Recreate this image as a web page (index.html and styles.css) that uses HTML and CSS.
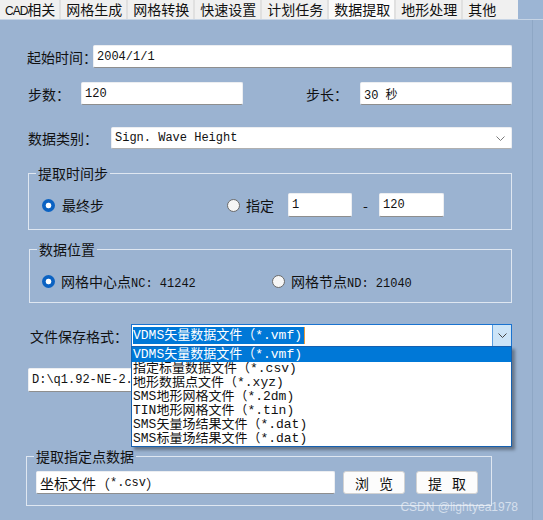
FILE: index.html
```html
<!DOCTYPE html>
<html lang="zh-CN">
<head>
  <meta charset="UTF-8">
  <meta name="viewport" content="width=device-width, initial-scale=1.0">
  <title>数据提取</title>
  <link rel="stylesheet" href="styles.css">
</head>
<body>
  <!-- Tab bar -->
  <div class="tabs">
    <div class="tab"><span class="tab-latin">CAD</span>相关</div>
    <div class="tab">网格生成</div>
    <div class="tab">网格转换</div>
    <div class="tab">快速设置</div>
    <div class="tab">计划任务</div>
    <div class="tab active">数据提取</div>
    <div class="tab">地形处理</div>
    <div class="tab last">其他</div>
  </div>

  <!-- Data extraction page -->
  <div class="panel">
    <div class="row row-first">
      <span class="label label-start">起始时间：</span>
      <div class="field">2004/1/1</div>
    </div>

    <div class="row row-steps">
      <span class="label label-steps">步数：</span>
      <div class="field field-steps">120</div>
      <span class="label label-len">步长：</span>
      <div class="field">30 秒</div>
    </div>

    <div class="row row-type">
      <span class="label label-type">数据类别：</span>
      <div class="field select">
        <span>Sign. Wave Height</span>
        <svg class="chevron" width="9" height="5" viewBox="0 0 9 5"><polyline points="0.5,0.5 4.5,4.5 8.5,0.5" fill="none" stroke="#7a7a7a" stroke-width="1"/></svg>
      </div>
    </div>

    <!-- Time step group -->
    <div class="group group-time">
      <span class="legend">提取时间步</span>
      <div class="opts opts-time">
        <div class="opt opt-time"><span class="radio on"></span><span>最终步</span></div>
        <div class="opt"><span class="radio"></span><span>指定</span></div>
        <div class="field field-num">1</div>
        <span class="dash">-</span>
        <div class="field field-num field-num2">120</div>
      </div>
    </div>

    <!-- Data location group -->
    <div class="group group-pos">
      <span class="legend">数据位置</span>
      <div class="opts">
        <div class="opt opt-pos"><span class="radio on"></span><span>网格中心点<span class="mono">NC: 41242</span></span></div>
        <div class="opt"><span class="radio"></span><span>网格节点<span class="mono">ND: 21040</span></span></div>
      </div>
    </div>

    <div class="row row-format">
      <span class="label label-format">文件保存格式：</span>
      <div class="combo">
        <div class="combo-value"><span class="hl">VDMS矢量数据文件（*.vmf)</span></div>
        <div class="combo-btn">
          <svg width="9" height="5" viewBox="0 0 9 5"><polyline points="0.5,0.5 4.5,4.5 8.5,0.5" fill="none" stroke="#444" stroke-width="1"/></svg>
        </div>
        <div class="combo-list">
          <div class="combo-item sel">VDMS矢量数据文件（*.vmf)</div>
          <div class="combo-item">指定标量数据文件（*.csv)</div>
          <div class="combo-item">地形数据点文件（*.xyz)</div>
          <div class="combo-item">SMS地形网格文件（*.2dm)</div>
          <div class="combo-item">TIN地形网格文件（*.tin)</div>
          <div class="combo-item">SMS矢量场结果文件（*.dat)</div>
          <div class="combo-item">SMS标量场结果文件（*.dat)</div>
        </div>
      </div>
    </div>

    <div class="row row-path">
      <div class="field field-path">D:\q1.92-NE-2.dat</div>
    </div>

    <!-- Point extraction group -->
    <div class="group group-point">
      <span class="legend">提取指定点数据</span>
      <div class="row">
        <div class="field field-file"><span class="cjk">坐标文件（</span>*.csv<span class="cjk">）</span></div>
        <button class="btn">浏览</button>
        <button class="btn btn-last">提取</button>
      </div>
    </div>
  </div>

  <div class="watermark">CSDN @lightyea1978</div>
</body>
</html>
```

FILE: styles.css
```css
/* General */
* {
  box-sizing: border-box;
}

body {
  margin: 0;
  width: 543px;
  height: 520px;
  overflow: hidden;
  position: relative;
  background: #9bb3d1;
  font-family: "Noto Sans CJK SC", sans-serif;
  font-size: 14px;
  color: #111;
}

/* Tabs */
.tabs {
  display: flex;
  height: 20px;
  background: #9cb5d4;
  border-bottom: 1px solid #c6d4e5;
}

.tab {
  padding: 0 4px 0 5px;
  background: #f0f0f0;
  border-right: 2px solid #e0e0e0;
  line-height: 19px;
  white-space: nowrap;
}

.tab.active {
  background: #fbfbfb;
}

.tab.last {
  padding-right: 22px;
  border-right: 0;
}

.tab-latin {
  font-family: "Liberation Sans", sans-serif;
  font-size: 12px;
  letter-spacing: -1px;
}

/* Panel */
.panel {
  width: 533px;
  height: 500px;
  border-right: 1px solid #8ea7c5;
  padding: 25px 20px 0 27px;
  display: flex;
  flex-direction: column;
}

.row {
  display: flex;
  align-items: center;
}

.label {
  flex-shrink: 0;
  white-space: nowrap;
}

.mono {
  font-family: "Liberation Mono", monospace;
  font-size: 12px;
}

.field {
  flex: 1;
  min-width: 0;
  height: 23px;
  display: flex;
  align-items: center;
  padding-left: 3px;
  background: #fff;
  border: 1px solid #eceef1;
  border-bottom-color: #8e8e8e;
  border-radius: 2px;
  font-family: "Liberation Mono", "Noto Sans CJK SC", monospace;
  font-size: 12px;
  white-space: nowrap;
  overflow: hidden;
}

.row-first { height: 23px; }
.label-start { width: 66px; }

.row-steps { margin-top: 14px; }
.label-steps { width: 53px; margin-left: 1px; }
.field-steps { flex: none; width: 162px; }
.label-len { width: 54px; margin-left: 63px; }

.row-type { margin-top: 22px; }
.label-type { width: 83px; margin-left: 1px; }

.select {
  height: 22px;
  justify-content: space-between;
  padding-right: 6px;
  border-bottom-color: #b0b0b0;
}

/* Group boxes */
.group {
  position: relative;
  border: 1px solid #dfe7f1;
}

.legend {
  position: absolute;
  top: -11px;
  left: 7px;
  padding: 0 2px;
  line-height: 20px;
  background: #9bb3d1;
}

.group-time {
  margin: 24px 0 0 1px;
  padding: 19px 0 12px 13px;
}

.group-pos {
  margin: 19px 0 0 2px;
  padding: 23px 0 13px 12px;
}

.opts {
  display: flex;
  align-items: center;
  height: 16px;
}

.opts-time { height: 24px; }

.opt {
  display: flex;
  align-items: center;
  gap: 6px;
  white-space: nowrap;
}

.opt-time { width: 185px; gap: 7px; }
.opt-pos { width: 230px; }

.radio {
  width: 13px;
  height: 13px;
  border-radius: 50%;
  background: #f6f6f6;
  border: 1px solid #6a6a6a;
}

.radio.on {
  border: 0;
  background: radial-gradient(circle, #fff 0 2.5px, #0b62c2 3.2px);
}

.field-num {
  flex: none;
  width: 64px;
  height: 24px;
  margin-left: 14px;
}

.field-num2 {
  width: 65px;
  margin-left: 0;
}

.dash {
  width: 27px;
  text-align: center;
}

/* Format combo */
.row-format { margin-top: 21px; }
.label-format { width: 101px; margin-left: 3px; }

.combo {
  position: relative;
  flex: 1;
  height: 23px;
  display: flex;
  background: #fff;
  border: 1px solid #1a73d0;
  font-family: "Liberation Mono", "Noto Sans CJK SC", monospace;
  font-size: 13px;
}

.combo-value {
  flex: 1;
  display: flex;
  align-items: center;
  padding-left: 1px;
}

.combo-value .hl {
  background: #0078d7;
  color: #fff;
  line-height: 17px;
  padding-right: 2px;
  border-right: 1px solid #e89a3c;
  white-space: nowrap;
}

.combo-btn {
  width: 19px;
  display: flex;
  align-items: center;
  justify-content: center;
  background: #cce4f7;
  border-left: 1px solid #5c9fe0;
}

.combo-list {
  position: absolute;
  top: 21px;
  left: -1px;
  right: -1px;
  z-index: 5;
  background: #fff;
  border: 1px solid #1560b0;
  box-shadow: 3px 3px 3px rgba(0, 0, 0, 0.35);
}

.combo-item {
  height: 14px;
  line-height: 14px;
  padding-left: 1px;
  white-space: nowrap;
  overflow: hidden;
}

.combo-item.sel {
  height: 15px;
  line-height: 15px;
  background: #0078d7;
  color: #fff;
}

/* Path and point group */
.row-path { margin-top: 21px; }

.field-path {
  flex: none;
  width: 460px;
  height: 24px;
  margin-left: 1px;
}

.group-point {
  margin: 64px 20px 0 -1px;
  padding: 14px 13px 11px 9px;
}

.field-file {
  flex: none;
  width: 299px;
}

.cjk {
  font-family: "Noto Sans CJK SC", sans-serif;
  font-size: 14px;
}

.btn {
  width: 62px;
  height: 23px;
  margin-left: 8px;
  padding: 0 0 0 10px;
  letter-spacing: 10px;
  background: #fcfcfc;
  border: 1px solid #d2d2d2;
  border-radius: 3px;
  font-family: "Noto Sans CJK SC", sans-serif;
  font-size: 14px;
  color: #111;
}

.btn-last { margin-left: 11px; }

.watermark {
  position: absolute;
  right: 25px;
  bottom: 6px;
  font-family: "Liberation Sans", sans-serif;
  font-size: 12px;
  color: rgba(240, 244, 250, 0.7);
}
```
